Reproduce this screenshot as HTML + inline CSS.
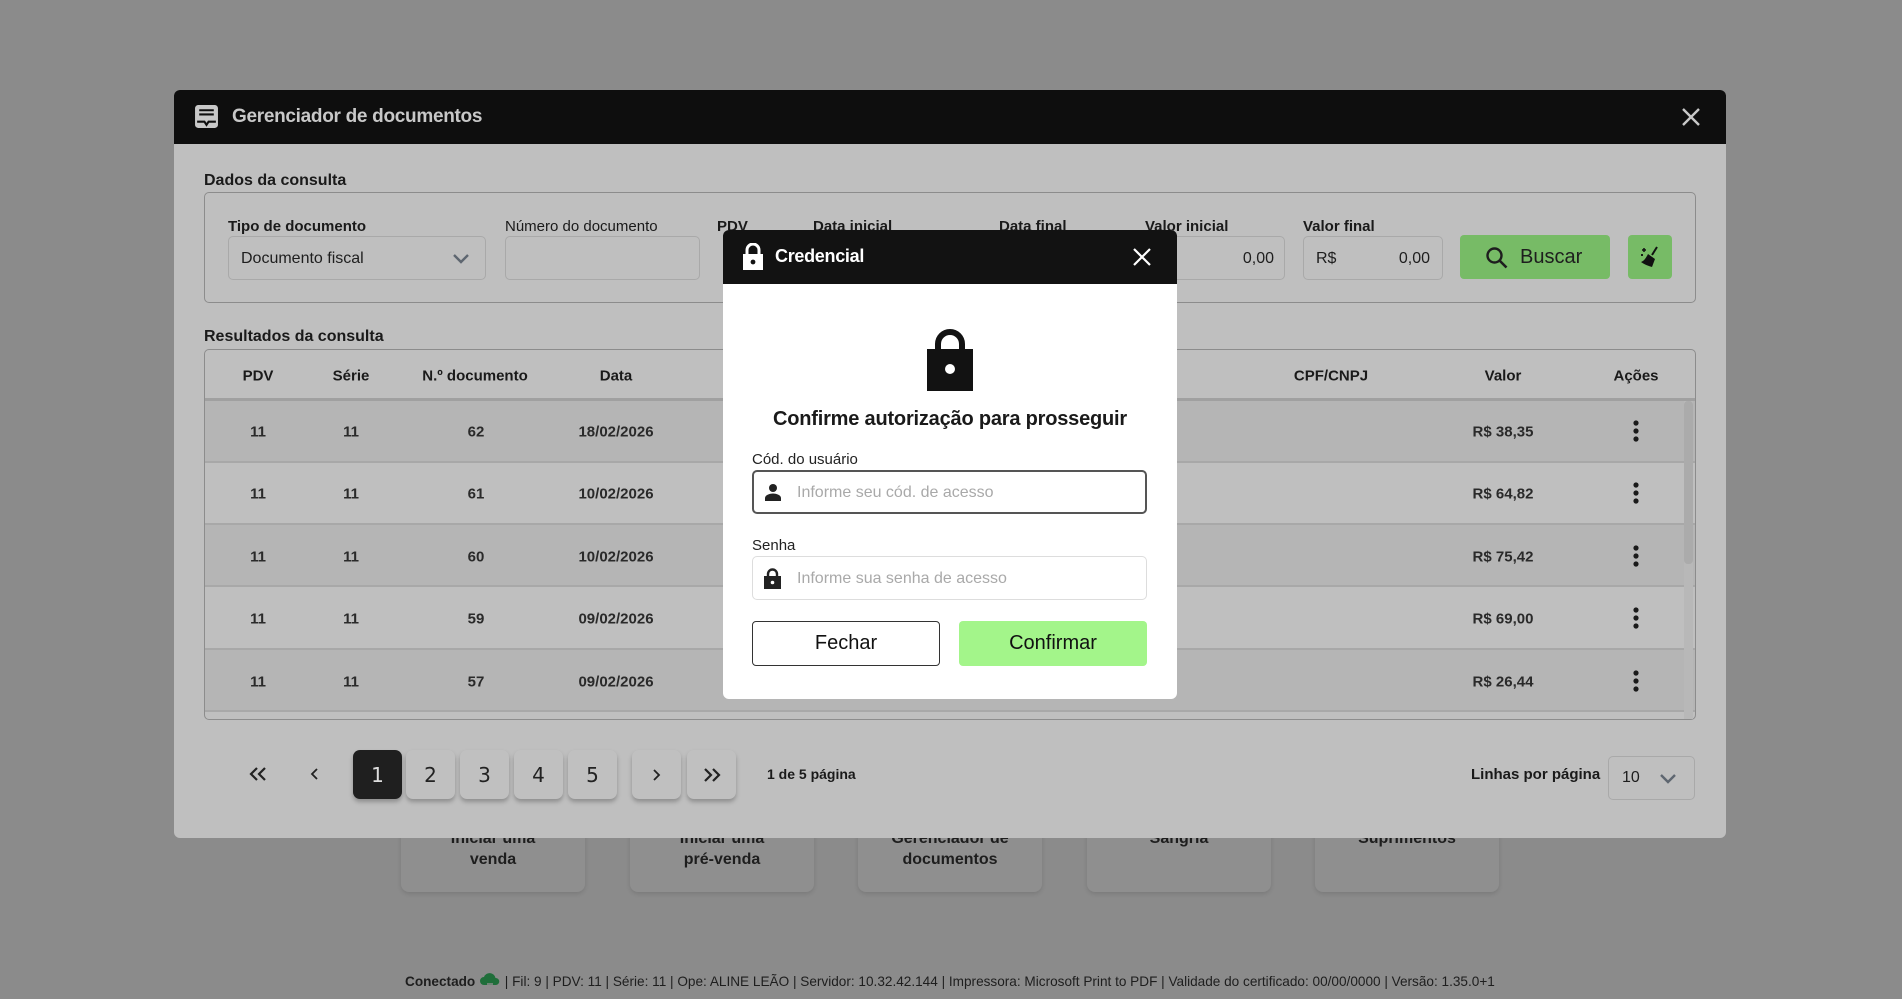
<!DOCTYPE html>
<html><head><meta charset="utf-8"><style>
*{box-sizing:border-box;margin:0;padding:0}
body{width:1902px;height:999px;background:#8b8b8b;font-family:"Liberation Sans",sans-serif;position:relative;overflow:hidden;color:#1a1a1a}
.abs{position:absolute}
.tile{position:absolute;top:760px;width:184px;height:132px;background:#8f8f8f;border-radius:8px;box-shadow:0 2px 4px rgba(0,0,0,.12);text-align:center;font-weight:bold;font-size:16px;color:#1e1e1e;line-height:21px;padding-top:68px}
.status{position:absolute;left:405px;top:972px;font-size:13.6px;color:#1e1e1e;white-space:nowrap}
.modal{position:absolute;left:174px;top:90px;width:1552px;height:748px;background:#bfbfbf;border-radius:6px;overflow:hidden}
.mh{height:54px;background:#0e0e0e;position:relative}
.lbl{position:absolute;font-size:15px;font-weight:bold;color:#1a1a1a}
.inp{position:absolute;border:1px solid #a9a9a9;border-radius:5px;height:44px;font-size:16px;color:#1e1e1e}
.th{position:absolute;top:376px;font-weight:bold;font-size:15px;transform:translate(-50%,-50%);white-space:nowrap}
.row{position:absolute;left:31px;width:1490px;height:62px;border-bottom:2px solid #a8a8a8}
.td{position:absolute;font-weight:bold;font-size:15px;color:#2a2a2a;transform:translate(-50%,-50%);white-space:nowrap}
.pb{position:absolute;top:660px;width:49px;height:49px;border-radius:7px;background:#c0c0c0;box-shadow:0 3px 4px rgba(0,0,0,.25);font-family:"DejaVu Sans",sans-serif;font-size:20px;display:flex;align-items:center;justify-content:center;color:#222}
.cred{position:absolute;left:723px;top:230px;width:454px;height:469px;background:#fff;border-radius:6px;overflow:hidden}
</style></head><body>
<div class="tile" style="left:401px">Iniciar uma<br>venda</div>
<div class="tile" style="left:630px">Iniciar uma<br>pré-venda</div>
<div class="tile" style="left:858px">Gerenciador de<br>documentos</div>
<div class="tile" style="left:1087px">Sangria</div>
<div class="tile" style="left:1315px">Suprimentos</div>
<div class="status"><b>Conectado</b> <svg width="22" height="18" viewBox="0 0 22 18" style="vertical-align:-4px"><path d="M5 13a4 4 0 0 1 0-8 6 6 0 0 1 11.5 1A3.5 3.5 0 0 1 17 13z" fill="#1f6e3a"/><path d="M8 12h6M8 15h6" stroke="#8b8b8b" stroke-width="1.5"/></svg> | Fil: 9 | PDV: 11 | Série: 11 | Ope: ALINE LEÃO | Servidor: 10.32.42.144 | Impressora: Microsoft Print to PDF | Validade do certificado: 00/00/0000 | Versão: 1.35.0+1</div>

<div class="modal">
 <div class="mh">
  <svg class="abs" style="left:20px;top:14px" width="25" height="25" viewBox="0 0 24 24"><rect x="1" y="1" width="22" height="22" rx="3" fill="#c8c8c8"/><path d="M5 6h14M5 10h14" stroke="#0e0e0e" stroke-width="2"/><path d="M3 17h7l2 3 2-3h7" stroke="#0e0e0e" stroke-width="2" fill="none"/></svg>
  <div class="abs" style="left:58px;top:16px;font-size:19px;font-weight:bold;color:#c8c8c8;letter-spacing:-.3px">Gerenciador de documentos</div>
  <svg class="abs" style="left:1507px;top:17px" width="20" height="20" viewBox="0 0 20 20"><path d="M2 2l16 16M18 2L2 18" stroke="#c8c8c8" stroke-width="2.4"/></svg>
 </div>
 <div class="lbl" style="left:30px;top:82px;font-size:16px">Dados da consulta</div>
 <div class="abs" style="left:30px;top:102px;width:1492px;height:111px;border:1.5px solid #8c8c8c;border-radius:5px"></div>
 <div class="lbl" style="left:54px;top:128px">Tipo de documento</div>
 <div class="inp" style="left:54px;top:146px;width:258px;padding:13px 12px">Documento fiscal<svg class="abs" style="right:16px;top:17px" width="16" height="10" viewBox="0 0 16 10"><path d="M1 1l7 7 7-7" stroke="#5e6670" stroke-width="2.4" fill="none"/></svg></div>
 <div class="lbl" style="left:331px;top:128px;font-weight:normal">Número do documento</div>
 <div class="inp" style="left:331px;top:146px;width:195px"></div>
 <div class="lbl" style="left:543px;top:128px">PDV</div>
 <div class="lbl" style="left:639px;top:128px">Data inicial</div>
 <div class="lbl" style="left:825px;top:128px">Data final</div>
 <div class="lbl" style="left:971px;top:128px">Valor inicial</div>
 <div class="inp" style="left:980px;top:146px;width:131px;text-align:right;padding:13px 10px">0,00</div>
 <div class="lbl" style="left:1129px;top:128px">Valor final</div>
 <div class="inp" style="left:1129px;top:146px;width:140px;padding:13px 12px">R$<span style="float:right">0,00</span></div>
 <div class="abs" style="left:1286px;top:145px;width:150px;height:44px;background:#77bb66;border-radius:4px;font-size:20px;color:#1e1e1e;padding:11px 0 0 60px">Buscar<svg class="abs" style="left:25px;top:11px" width="24" height="24" viewBox="0 0 24 24"><circle cx="9.5" cy="9.5" r="7" stroke="#1e1e1e" stroke-width="2.4" fill="none"/><path d="M14.5 14.5l7 7" stroke="#1e1e1e" stroke-width="2.6"/></svg></div>
 <div class="abs" style="left:1454px;top:145px;width:44px;height:44px;background:#77bb66;border-radius:4px"><svg class="abs" style="left:10px;top:10px" width="24" height="24" viewBox="0 0 24 24"><path d="M19 2l-5 8" stroke="#111" stroke-width="2"/><path d="M10 9l7 5-3 8c-3-1-7-2-11-5 3-1 5-4 7-8z" fill="#111"/><path d="M4 5h4M6 3v4M3 10h2M4 9v2" stroke="#111" stroke-width="1.5"/></svg></div>

 <div class="lbl" style="left:30px;top:238px;font-size:16px">Resultados da consulta</div>
 <div class="abs" style="left:30px;top:259px;width:1492px;height:371px;border:1.5px solid #8c8c8c;border-radius:5px;overflow:hidden">
  <div class="abs" style="left:0;top:0;width:100%;height:51px;border-bottom:3px solid #a0a0a0"></div>
 </div>
 <div class="th" style="left:84px;top:286px">PDV</div><div class="th" style="left:177px;top:286px">Série</div><div class="th" style="left:301px;top:286px">N.º documento</div><div class="th" style="left:442px;top:286px">Data</div><div class="th" style="left:1157px;top:286px">CPF/CNPJ</div><div class="th" style="left:1329px;top:286px">Valor</div><div class="th" style="left:1462px;top:286px">Ações</div>
 <div class="row" style="top:311px;background:#b5b5b5"></div>
 <div class="row" style="top:373px;background:#bfbfbf"></div>
 <div class="row" style="top:435px;background:#b5b5b5"></div>
 <div class="row" style="top:498px;background:#bfbfbf"></div>
 <div class="row" style="top:560px;background:#b5b5b5"></div>
 <div class="abs" style="left:1510px;top:311px;width:9px;height:318px;background:#b8b8b8"></div>
 <div class="abs" style="left:1510px;top:311px;width:9px;height:163px;background:#ababab;border-radius:4px"></div>
 <div class="td" style="left:84px;top:342px">11</div><div class="td" style="left:177px;top:342px">11</div><div class="td" style="left:302px;top:342px">62</div><div class="td" style="left:442px;top:342px">18/02/2026</div><div class="td" style="left:1329px;top:342px">R$ 38,35</div>
 <div class="td" style="left:84px;top:404px">11</div><div class="td" style="left:177px;top:404px">11</div><div class="td" style="left:302px;top:404px">61</div><div class="td" style="left:442px;top:404px">10/02/2026</div><div class="td" style="left:1329px;top:404px">R$ 64,82</div>
 <div class="td" style="left:84px;top:467px">11</div><div class="td" style="left:177px;top:467px">11</div><div class="td" style="left:302px;top:467px">60</div><div class="td" style="left:442px;top:467px">10/02/2026</div><div class="td" style="left:1329px;top:467px">R$ 75,42</div>
 <div class="td" style="left:84px;top:529px">11</div><div class="td" style="left:177px;top:529px">11</div><div class="td" style="left:302px;top:529px">59</div><div class="td" style="left:442px;top:529px">09/02/2026</div><div class="td" style="left:1329px;top:529px">R$ 69,00</div>
 <div class="td" style="left:84px;top:592px">11</div><div class="td" style="left:177px;top:592px">11</div><div class="td" style="left:302px;top:592px">57</div><div class="td" style="left:442px;top:592px">09/02/2026</div><div class="td" style="left:1329px;top:592px">R$ 26,44</div>
 <svg class="abs" style="left:1458px;top:330px" width="8" height="280" viewBox="0 0 8 280"><g fill="#1a1a1a"><circle cx="4" cy="3" r="2.6"/><circle cx="4" cy="11" r="2.6"/><circle cx="4" cy="19" r="2.6"/><circle cx="4" cy="65" r="2.6"/><circle cx="4" cy="73" r="2.6"/><circle cx="4" cy="81" r="2.6"/><circle cx="4" cy="128" r="2.6"/><circle cx="4" cy="136" r="2.6"/><circle cx="4" cy="144" r="2.6"/><circle cx="4" cy="190" r="2.6"/><circle cx="4" cy="198" r="2.6"/><circle cx="4" cy="206" r="2.6"/><circle cx="4" cy="253" r="2.6"/><circle cx="4" cy="261" r="2.6"/><circle cx="4" cy="269" r="2.6"/></g></svg>

 <svg class="abs" style="left:75px;top:677px" width="18" height="14" viewBox="0 0 18 14"><path d="M8 1L2 7l6 6M16 1l-6 6 6 6" stroke="#222" stroke-width="2.2" fill="none"/></svg>
 <svg class="abs" style="left:136px;top:678px" width="8" height="12" viewBox="0 0 8 12"><path d="M7 1L2 6l5 5" stroke="#222" stroke-width="1.8" fill="none"/></svg>
 <div class="pb" style="left:179px;background:#1f1f1f;color:#ddd">1</div>
 <div class="pb" style="left:232px">2</div><div class="pb" style="left:286px">3</div><div class="pb" style="left:340px">4</div><div class="pb" style="left:394px">5</div>
 <div class="pb" style="left:458px"><svg width="8" height="12" viewBox="0 0 8 12"><path d="M1 1l5 5-5 5" stroke="#222" stroke-width="1.8" fill="none"/></svg></div>
 <div class="pb" style="left:513px"><svg width="18" height="14" viewBox="0 0 18 14"><path d="M2 1l6 6-6 6M10 1l6 6-6 6" stroke="#222" stroke-width="2.2" fill="none"/></svg></div>
 <div class="abs" style="left:593px;top:676px;font-weight:bold;font-size:14px">1 de 5 página</div>
 <div class="abs" style="left:1297px;top:676px;font-weight:bold;font-size:15px">Linhas por página</div>
 <div class="inp" style="left:1434px;top:666px;width:87px;height:44px;padding:12px 13px">10<svg class="abs" style="right:18px;top:17px" width="16" height="10" viewBox="0 0 16 10"><path d="M1 1l7 7 7-7" stroke="#5e6670" stroke-width="2.4" fill="none"/></svg></div>
</div>

<div class="cred">
 <div style="height:54px;background:#121212;position:relative">
  <svg class="abs" style="left:19px;top:13px" width="22" height="27" viewBox="0 0 22 27"><path d="M5 11V7a6 6 0 0 1 12 0v4" stroke="#fff" stroke-width="3" fill="none"/><rect x="1" y="11" width="20" height="16" fill="#fff"/><circle cx="11" cy="19" r="2.4" fill="#121212"/></svg>
  <div class="abs" style="left:52px;top:16px;font-size:18px;font-weight:bold;color:#fff;letter-spacing:-.3px">Credencial</div>
  <svg class="abs" style="left:410px;top:18px" width="18" height="18" viewBox="0 0 18 18"><path d="M1 1l16 16M17 1L1 17" stroke="#fff" stroke-width="2.2"/></svg>
 </div>
 <svg class="abs" style="left:204px;top:99px" width="46" height="62" viewBox="0 0 46 62"><path d="M11 22V15a12 12 0 0 1 24 0v7" stroke="#121212" stroke-width="6" fill="none"/><rect x="0" y="20" width="46" height="42" fill="#121212"/><circle cx="23" cy="40" r="5" fill="#fff"/></svg>
 <div class="abs" style="left:0;width:454px;top:178px;text-align:center;font-weight:bold;font-size:20px;color:#1a1a1a;letter-spacing:-.2px">Confirme autorização para prosseguir</div>
 <div class="abs" style="left:29px;top:221px;font-size:15px;color:#222">Cód. do usuário</div>
 <div class="abs" style="left:29px;top:240px;width:395px;height:44px;border:2px solid #555;border-radius:5px"><svg class="abs" style="left:10px;top:11px" width="18" height="18" viewBox="0 0 18 18"><circle cx="9" cy="5" r="4" fill="#222"/><path d="M1 18v-3c0-3 5-4.5 8-4.5s8 1.5 8 4.5v3z" fill="#222"/></svg><span class="abs" style="left:43px;top:12px;font-size:16px;color:#a9a9a9">Informe seu cód. de acesso</span></div>
 <div class="abs" style="left:29px;top:307px;font-size:15px;color:#222">Senha</div>
 <div class="abs" style="left:29px;top:326px;width:395px;height:44px;border:1px solid #ddd;border-radius:5px"><svg class="abs" style="left:11px;top:11px" width="17" height="21" viewBox="0 0 17 21"><path d="M4 9V6a4.5 4.5 0 0 1 9 0v3" stroke="#222" stroke-width="2.4" fill="none"/><rect x="0" y="8" width="17" height="13" fill="#222"/><circle cx="8.5" cy="14.5" r="1.8" fill="#fff"/></svg><span class="abs" style="left:44px;top:13px;font-size:16px;color:#a9a9a9">Informe sua senha de acesso</span></div>
 <div class="abs" style="left:29px;top:391px;width:188px;height:45px;border:1.5px solid #333;border-radius:4px;text-align:center;line-height:42px;font-size:20px;color:#111">Fechar</div>
 <div class="abs" style="left:236px;top:391px;width:188px;height:45px;background:#a3f58a;border-radius:4px;text-align:center;line-height:44px;font-size:20px;color:#111">Confirmar</div>
</div>
</body></html>
